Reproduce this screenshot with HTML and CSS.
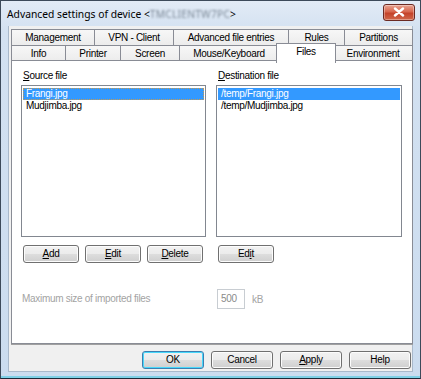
FILE: index.html
```html
<!DOCTYPE html>
<html>
<head>
<meta charset="utf-8">
<link rel="stylesheet" href="styles.css">
</head>
<body>
<div class="window">
  <div class="titlebar">
    <span class="title">Advanced settings of device &lt;<span class="blur">TMCLIENTW7PC</span>&gt;</span>
    <span class="close"><svg width="12" height="10" viewBox="0 0 12 10"><path d="M2 1.5 L10 8.5 M10 1.5 L2 8.5" stroke="#fff" stroke-width="2.4" stroke-linecap="round"/></svg></span>
  </div>
  <div class="client">
    <div class="tabs">
      <div class="tabrow row1">
        <div class="tab">Management</div>
        <div class="tab">VPN - Client</div>
        <div class="tab">Advanced file entries</div>
        <div class="tab">Rules</div>
        <div class="tab last">Partitions</div>
      </div>
      <div class="tabrow row2">
        <div class="tab">Info</div>
        <div class="tab">Printer</div>
        <div class="tab">Screen</div>
        <div class="tab">Mouse/Keyboard</div>
        <div class="tab selected">Files</div>
        <div class="tab last">Environment</div>
      </div>
    </div>
    <div class="page">
      <div class="cols">
        <div class="col">
          <div class="label"><u>S</u>ource file</div>
          <div class="listbox">
            <div class="item sel focus">Frangi.jpg</div>
            <div class="item">Mudjimba.jpg</div>
          </div>
          <div class="btnrow">
            <button class="btn"><u>A</u>dd</button>
            <button class="btn"><u>E</u>dit</button>
            <button class="btn"><u>D</u>elete</button>
          </div>
        </div>
        <div class="col">
          <div class="label"><u>D</u>estination file</div>
          <div class="listbox">
            <div class="item sel">/temp/Frangi.jpg</div>
            <div class="item">/temp/Mudjimba.jpg</div>
          </div>
          <div class="btnrow">
            <button class="btn">Ed<u>i</u>t</button>
          </div>
        </div>
        <div class="col">
          <div class="disabled maxlabel">Maximum size of imported files</div>
        </div>
        <div class="col sizerow">
          <div class="input">500</div>
          <span class="disabled">kB</span>
        </div>
      </div>
    </div>
    <div class="footer">
      <button class="btn wide default">OK</button>
      <button class="btn wide">Cancel</button>
      <button class="btn wide"><u>A</u>pply</button>
      <button class="btn wide">Help</button>
    </div>
  </div>
</div>
</body>
</html>
```
FILE: styles.css
```css
* { box-sizing: border-box; }
html, body { margin: 0; padding: 0; }
body {
  width: 421px;
  height: 379px;
  overflow: hidden;
  font-family: "Liberation Sans", Arial, sans-serif;
  font-size: 10px;
  letter-spacing: -0.3px;
  color: #000;
  background: #fff;
}
.window {
  width: 421px;
  height: 379px;
  border: 1px solid #3d4a5a;
  border-bottom-color: #1b2a3a;
  background: linear-gradient(#e2ebf6, #d3e1f1 30px, #cbdcef);
  display: flex;
  flex-direction: column;
  box-shadow: inset 0 -2px 0 #7fd0e6;
}
.titlebar {
  height: 25px;
  flex: none;
  display: flex;
  align-items: center;
  justify-content: space-between;
  padding: 0 5px 0 6px;
}
.title {
  font-family: "Noto Sans", "Open Sans", sans-serif;
  font-size: 10.3px;
  letter-spacing: 0;
  color: #000;
}
.blur {
  color: #7d8a98;
  filter: blur(1.3px);
  letter-spacing: 0.2px;
}
.close {
  width: 32px;
  height: 17px;
  margin-top: -3px;
  border: 1px solid #6b2a23;
  border-radius: 3px;
  background: linear-gradient(#e8a493, #d7664d 45%, #c4432a 55%, #d0674a);
  box-shadow: inset 0 0 0 1px rgba(255,255,255,0.35);
  display: flex;
  align-items: center;
  justify-content: center;
}
.client {
  flex: 1;
  margin: 0 7px 6px 7px;
  background: #f0f0f0;
  display: flex;
  flex-direction: column;
  padding: 3px 1px 0 2px;
  border: 1px solid #a9b9cb;
  border-top: none;
}
.tabs {
  display: flex;
  flex-direction: column;
  width: 402px;
}
.tabrow {
  display: grid;
  height: 16px;
}
.row1 { grid-template-columns: 83px 79px 115px 56px 69px; }
.row2 { grid-template-columns: 54px 55px 59px 99px 56px 79px; }
.tab {
  border: 1px solid #898c95;
  border-right: none;
  border-bottom: none;
  background: linear-gradient(#f7f7f7, #ececec);
  text-align: center;
  line-height: 15px;
  white-space: nowrap;
}
.tab.last { border-right: 1px solid #898c95; }
.row2 .tab { border-bottom: 1px solid #898c95; }
.tab.selected {
  background: #fff;
  border-right: 1px solid #898c95;
  border-bottom: none;
  margin: -2px -2px -1px -2px;
  line-height: 16px;
  position: relative;
  z-index: 2;
}
.tab.selected + .tab { border-left: none; }
.page {
  width: 402px;
  height: 284px;
  margin-top: -1px;
  background: #fff;
  border: 1px solid #898c95;
  box-shadow: 0 1px 0 #a0a0a0;
  padding: 8px 9px 0 9px;
}
.cols {
  display: grid;
  grid-template-columns: 185px 186px;
  column-gap: 10px;
  row-gap: 26px;
}
.col { display: flex; flex-direction: column; }
.label {
  line-height: 13px;
  margin-bottom: 3px;
  padding-left: 2px;
}
.listbox {
  height: 152px;
  border: 1px solid #828790;
  background: #fff;
  padding: 2px 1px;
}
.item {
  height: 12px;
  line-height: 12px;
  padding-left: 3px;
  white-space: nowrap;
}
.item.sel { background: #3399ff; color: #fff; }
.item.focus { outline: 1px dotted #c89a4e; outline-offset: -1px; }
.btnrow {
  display: flex;
  gap: 6px;
  margin-top: 8px;
  padding-left: 2px;
}
.btn {
  width: 56px;
  height: 18px;
  padding: 0;
  font-family: inherit;
  font-size: 10px;
  letter-spacing: -0.3px;
  color: #000;
  border: 1px solid #707070;
  border-radius: 3px;
  background: linear-gradient(#f2f2f2, #ebebeb 50%, #dddddd 51%, #cfcfcf);
  box-shadow: inset 0 0 0 1px #fcfcfc;
  line-height: 14px;
}
.disabled { color: #a3a3a3; }
.maxlabel { padding-left: 1px; line-height: 20px; }
.sizerow {
  flex-direction: row;
  align-items: center;
  gap: 7px;
  padding-left: 1px;
}
.input {
  width: 28px;
  height: 20px;
  border: 1px solid #c8cdd2;
  color: #8a8a8a;
  line-height: 18px;
  padding-left: 3px;
}
.footer {
  display: flex;
  justify-content: flex-end;
  gap: 7px;
  padding-top: 7px;
  padding-right: 0;
}
.btn.wide { width: 62px; }
.btn.default {
  border-color: #3c7fb1;
  box-shadow: inset 0 0 0 1px #48d8fb;
}
u { text-decoration: underline; text-underline-offset: 1px; }
```
